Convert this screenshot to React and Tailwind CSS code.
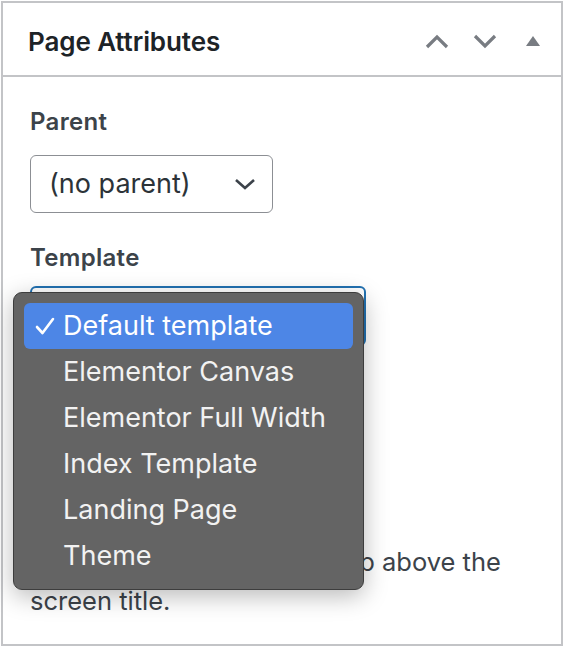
import React from "react";

const templates = [
  "Default template",
  "Elementor Canvas",
  "Elementor Full Width",
  "Index Template",
  "Landing Page",
  "Theme",
];

export default function App() {
  return (
    <div
      className="w-[564px] h-[648px] bg-white pt-px pl-px pr-px"
      style={{ fontFamily: "Inter, 'Noto Sans', sans-serif" }}
    >
      <div className="relative h-[645px] border-2 border-[#c3c4c7] bg-white">
        {/* Header */}
        <div className="flex h-[74px] items-center justify-between border-b-2 border-[#c3c4c7] pl-[25px] pr-[20px] pt-[4px]">
          <h2 className="text-[26px] font-semibold tracking-[-0.1px] text-[#1d2327]">Page Attributes</h2>
          <div className="flex items-center gap-[24px] text-[#787c82]">
            <svg width="24" height="16" viewBox="0 0 24 16" fill="none">
              <path d="M2 14 L12 4 L22 14" stroke="currentColor" strokeWidth="3.2" />
            </svg>
            <svg width="24" height="16" viewBox="0 0 24 16" fill="none">
              <path d="M2 3 L12 13 L22 3" stroke="currentColor" strokeWidth="3.2" />
            </svg>
            <svg width="16" height="12" viewBox="0 0 16 12" className="ml-[4px]">
              <path d="M8 1 L15 11 L1 11 Z" fill="currentColor" />
            </svg>
          </div>
        </div>

        {/* Body */}
        <div className="pl-[27px] pr-[20px]">
          <div className="mt-[30px] text-[24px] font-semibold leading-[30px] tracking-[0.3px] text-[#3c434a]">Parent</div>
          <div className="mt-[18px] flex h-[58px] w-[243px] items-center justify-between rounded-[6px] border-[1.5px] border-[#8c8f94] pl-[18px] pr-[16px]">
            <span className="text-[27px] text-[#2c3338]">(no parent)</span>
            <svg width="22" height="14" viewBox="0 0 22 14" fill="none">
              <path d="M2 3 L11 11 L20 3" stroke="#3c434a" strokeWidth="2.6" />
            </svg>
          </div>

          <div className="mt-[30px] text-[24px] font-semibold leading-[30px] tracking-[0.3px] text-[#3c434a]">Template</div>
          <div className="mt-[13px] h-[60px] w-[336px] rounded-[6px] border-2 border-[#2271b1]"></div>

          <div className="mt-[40px] text-[24px] font-semibold leading-[30px] text-[#3c434a]">Order</div>
          <div className="mt-[15px] h-[58px] w-[120px] rounded-[6px] border-[1.5px] border-[#8c8f94]"></div>

          <p className="mt-[53px] text-[25.5px] leading-[39px] text-[#3c434a]">
            Need help? Use the Help tab above the screen title.
          </p>
        </div>

        {/* Open select menu */}
        <div className="absolute left-[10px] top-[289px] w-[351px] rounded-[9px] border border-[#3d3d3d] bg-[#646464] pt-[10px] pb-[10px] pl-[10px] pr-[10px] shadow-[0_6px_24px_rgba(0,0,0,0.28)]">
          {templates.map((t, i) => (
            <div
              key={t}
              className={
                i === 0
                  ? "flex h-[46px] items-center rounded-[6px] bg-[#4d86e6] text-[27px] text-white"
                  : "flex h-[46px] items-center text-[27px] text-[#f2f2f2]"
              }
            >
              <span className="flex w-[39px] justify-center pl-[2px]">
                {i === 0 && (
                  <svg width="20" height="18" viewBox="0 0 20 18" fill="none">
                    <path d="M2 10 L7.5 16 L18 2" stroke="white" strokeWidth="2.6" strokeLinecap="round" strokeLinejoin="round" />
                  </svg>
                )}
              </span>
              <span>{t}</span>
            </div>
          ))}
        </div>
      </div>
    </div>
  );
}
